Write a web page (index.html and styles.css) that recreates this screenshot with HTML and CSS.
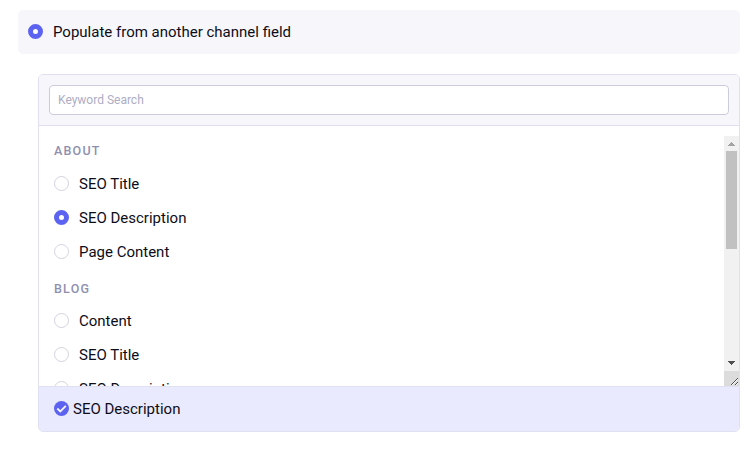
FILE: index.html
```html
<!DOCTYPE html>
<html lang="en">
<head>
<meta charset="utf-8">
<title>Populate field</title>
<link rel="stylesheet" href="styles.css">
</head>
<body>
<main class="page">
  <div class="banner">
    <span class="radio radio--on"></span>
    <span class="label">Populate from another channel field</span>
  </div>
  <section class="panel">
    <div class="panel__search">
      <input class="search" type="text" placeholder="Keyword Search">
    </div>
    <div class="panel__body">
      <div class="list">
        <h3 class="heading heading--first">ABOUT</h3>
        <div class="option"><span class="radio"></span><span class="label">SEO Title</span></div>
        <div class="option"><span class="radio radio--on"></span><span class="label">SEO Description</span></div>
        <div class="option"><span class="radio"></span><span class="label">Page Content</span></div>
        <h3 class="heading">BLOG</h3>
        <div class="option"><span class="radio"></span><span class="label">Content</span></div>
        <div class="option"><span class="radio"></span><span class="label">SEO Title</span></div>
        <div class="option"><span class="radio"></span><span class="label">SEO Description</span></div>
      </div>
      <div class="scroll">
        <svg class="scroll__arrow" width="15" height="15" shape-rendering="crispEdges"><path fill="#a3a3a3" d="M7 6h1v1h1v1h1v1h1v1H4V9h1V8h1V7h1z"/></svg>
        <div class="scroll__thumb"></div>
        <svg class="scroll__arrow scroll__arrow--down" width="15" height="15" shape-rendering="crispEdges"><path fill="#505050" d="M4 5h7v1h-1v1H9v1H8v1H7V8H6V7H5V6H4z"/></svg>
        <svg class="scroll__grip" width="15" height="15"><path d="M7 14l7-7M11 14l3-3" stroke="#505050"/><path d="M8 14l6-6M12 14l2-2" stroke="#fff" stroke-width=".8"/></svg>
      </div>
    </div>
    <div class="panel__footer">
      <svg class="check" width="15" height="15" viewBox="0 0 15 15"><circle cx="7.5" cy="7.5" r="7.5" fill="#5d63f1"/><path d="M3.3 7.5l3 2.9 5.5-5.5" fill="none" stroke="#f4f4fe" stroke-width="1.9"/></svg>
      <span class="label">SEO Description</span>
    </div>
  </section>
</main>
</body>
</html>
```

FILE: styles.css
```css
* {
  box-sizing: border-box;
}

body {
  margin: 0;
  background: #fff;
  color: #0d0d19;
  font: 15px/20px Roboto, sans-serif;
}

.page {
  padding: 10px 14px 20px 18px;
}

.banner {
  display: flex;
  align-items: center;
  gap: 10px;
  height: 44px;
  padding: 0 10px;
  border-radius: 5px;
  background: #f7f7fb;
}

.radio {
  flex: none;
  width: 15px;
  height: 15px;
  margin-bottom: 1px;
  border: 1px solid #d3d3e1;
  border-radius: 50%;
  background: #fff;
}

.radio--on {
  border: 5px solid #5d63f1;
}

.panel {
  height: 358px;
  margin: 20px 0 0 20px;
  border: 1px solid #dfe0f0;
  border-radius: 5px;
  overflow: hidden;
}

.panel__search {
  height: 51px;
  padding: 10px;
  border-bottom: 1px solid #dfe0f0;
  background: #f7f7fb;
}

.search {
  display: block;
  width: 100%;
  height: 30px;
  padding: 0 8px;
  border: 1px solid #cbcbda;
  border-radius: 4px;
  background: #fff;
  font: 12px/18px Roboto, sans-serif;
}

.search::placeholder {
  color: #adadc5;
}

.panel__body {
  display: flex;
  height: 260px;
  padding-top: 10px;
}

.list {
  flex: 1;
  padding-left: 15px;
  overflow: hidden;
}

.heading {
  height: 35px;
  margin: 0;
  padding-top: 10px;
  color: #8f90b0;
  font-size: 12.5px;
  font-weight: 500;
  letter-spacing: 1.2px;
}

.heading--first {
  height: 31px;
  padding-top: 5px;
}

.option {
  display: flex;
  align-items: center;
  gap: 10px;
  height: 34px;
}

.scroll {
  display: flex;
  flex-direction: column;
  width: 15px;
  background: #f1f1f1;
}

.scroll__arrow,
.scroll__grip {
  display: block;
  flex: none;
}

.scroll__thumb {
  height: 98px;
  margin: 0 2px;
  background: #c1c1c1;
}

.scroll__arrow--down {
  margin-top: auto;
}

.scroll__grip {
  background: #dcdcdc;
}

.panel__footer {
  display: flex;
  align-items: center;
  gap: 4px;
  height: 45px;
  padding-left: 15px;
  border-top: 1px solid #dfe0f0;
  background: #e9eafd;
}

.check {
  margin-bottom: 1px;
}
```
